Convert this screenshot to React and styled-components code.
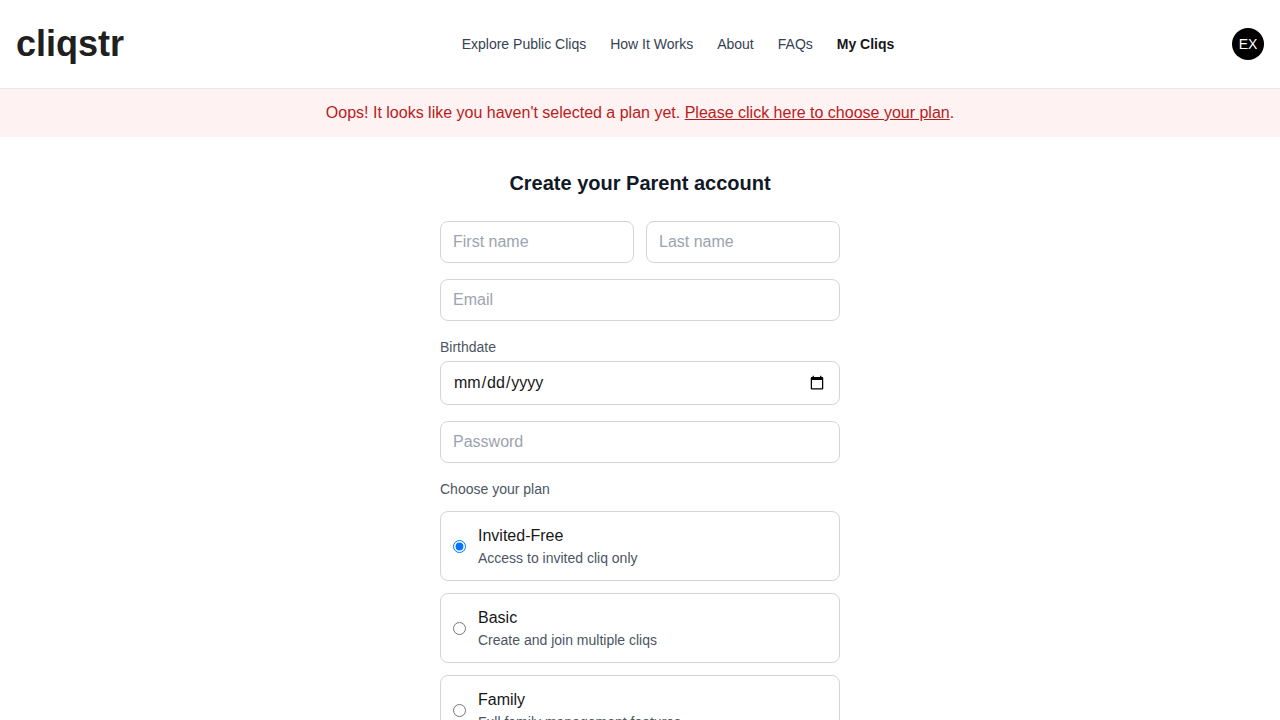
import React from 'react';
import styled, { createGlobalStyle } from 'styled-components';

const GlobalStyle = createGlobalStyle`
  *, *::before, *::after { box-sizing: border-box; }
  body {
    margin: 0;
    background: #ffffff;
    color: #171717;
    font-family: Arial, "Liberation Sans", Helvetica, sans-serif;
    font-size: 16px;
    line-height: 24px;
  }
`;

const Header = styled.header`
  display: flex;
  justify-content: space-between;
  align-items: center;
  padding: 24px 16px;
  border-bottom: 1px solid #e5e7eb;
`;

const Logo = styled.a`
  font-size: 36px;
  line-height: 40px;
  font-weight: 700;
  color: #202020;
  text-decoration: none;
`;

const Nav = styled.nav`
  display: flex;
  gap: 24px;
`;

const NavLink = styled.a`
  font-size: 14px;
  line-height: 20px;
  color: ${({ $active }) => ($active ? '#171717' : '#374151')};
  font-weight: ${({ $active }) => ($active ? 700 : 400)};
  text-decoration: none;
`;

const Avatar = styled.button`
  width: 32px;
  height: 32px;
  padding: 0;
  border: 0;
  border-radius: 50%;
  background: #000000;
  color: #ffffff;
  font: inherit;
  font-size: 14px;
  line-height: 20px;
  cursor: pointer;
`;

const Alert = styled.div`
  padding: 12px 16px;
  background: #fef2f2;
  color: #b91c1c;
  text-align: center;
`;

const AlertLink = styled.a`
  color: inherit;
  text-decoration: underline;
`;

const Main = styled.main`
  max-width: 432px;
  margin: 0 auto;
  padding: 32px 16px;
`;

const Title = styled.h1`
  margin: 0 0 24px;
  font-size: 20px;
  line-height: 28px;
  font-weight: 700;
  text-align: center;
  color: #111827;
`;

const Form = styled.form`
  display: flex;
  flex-direction: column;
  gap: 16px;
`;

const NameRow = styled.div`
  display: grid;
  grid-template-columns: 1fr 1fr;
  gap: 12px;
`;

const Input = styled.input`
  display: block;
  width: 100%;
  padding: 8px 12px;
  border: 1px solid #d1d5db;
  border-radius: 8px;
  background: #ffffff;
  color: #171717;
  font: inherit;
  &::placeholder { color: #9ca3af; opacity: 1; }
`;

const Field = styled.div`
  display: flex;
  flex-direction: column;
  gap: 4px;
`;

const Label = styled.label`
  font-size: 14px;
  line-height: 20px;
  color: #4b5563;
`;

const Plans = styled.fieldset`
  display: flex;
  flex-direction: column;
  gap: 12px;
  min-width: 0;
  margin: 0;
  padding: 0;
  border: 0;
`;

const PlansLegend = styled.legend`
  margin-bottom: 12px;
  padding: 0;
  font-size: 14px;
  line-height: 20px;
  color: #4b5563;
`;

const PlanCard = styled.label`
  display: flex;
  align-items: center;
  gap: 12px;
  padding: 12px;
  border: 1px solid #d1d5db;
  border-radius: 8px;
  cursor: pointer;
`;

const Radio = styled.input`
  width: 13px;
  height: 13px;
  margin: 0;
`;

const PlanText = styled.span`
  display: flex;
  flex-direction: column;
`;

const PlanName = styled.span`
  line-height: 24px;
`;

const PlanNote = styled.span`
  font-size: 14px;
  line-height: 20px;
  color: #4b5563;
`;

const Submit = styled.button`
  padding: 8px 16px;
  border: 0;
  border-radius: 8px;
  background: #000000;
  color: #ffffff;
  font: inherit;
`;

const links = ['Explore Public Cliqs', 'How It Works', 'About', 'FAQs', 'My Cliqs'];

const plans = [
  { id: 'invited', name: 'Invited-Free', note: 'Access to invited cliq only' },
  { id: 'basic', name: 'Basic', note: 'Create and join multiple cliqs' },
  { id: 'family', name: 'Family', note: 'Full family management features' },
];

export default function App() {
  return (
    <>
      <GlobalStyle />
      <Header>
        <Logo href="#">cliqstr</Logo>
        <Nav>
          {links.map((text) => (
            <NavLink key={text} href="#" $active={text === 'My Cliqs'}>{text}</NavLink>
          ))}
        </Nav>
        <Avatar type="button">EX</Avatar>
      </Header>
      <Alert role="alert">
        Oops! It looks like you haven't selected a plan yet.{' '}
        <AlertLink href="#">Please click here to choose your plan</AlertLink>.
      </Alert>
      <Main>
        <Title>Create your Parent account</Title>
        <Form>
          <NameRow>
            <Input aria-label="First name" placeholder="First name" />
            <Input aria-label="Last name" placeholder="Last name" />
          </NameRow>
          <Input type="email" aria-label="Email" placeholder="Email" />
          <Field>
            <Label htmlFor="birthdate">Birthdate</Label>
            <Input id="birthdate" type="date" />
          </Field>
          <Input type="password" aria-label="Password" placeholder="Password" />
          <Plans>
            <PlansLegend>Choose your plan</PlansLegend>
            {plans.map((plan, i) => (
              <PlanCard key={plan.id}>
                <Radio type="radio" name="plan" value={plan.id} defaultChecked={i === 0} />
                <PlanText>
                  <PlanName>{plan.name}</PlanName>
                  <PlanNote>{plan.note}</PlanNote>
                </PlanText>
              </PlanCard>
            ))}
          </Plans>
          <Submit type="submit">Create account</Submit>
        </Form>
      </Main>
    </>
  );
}
